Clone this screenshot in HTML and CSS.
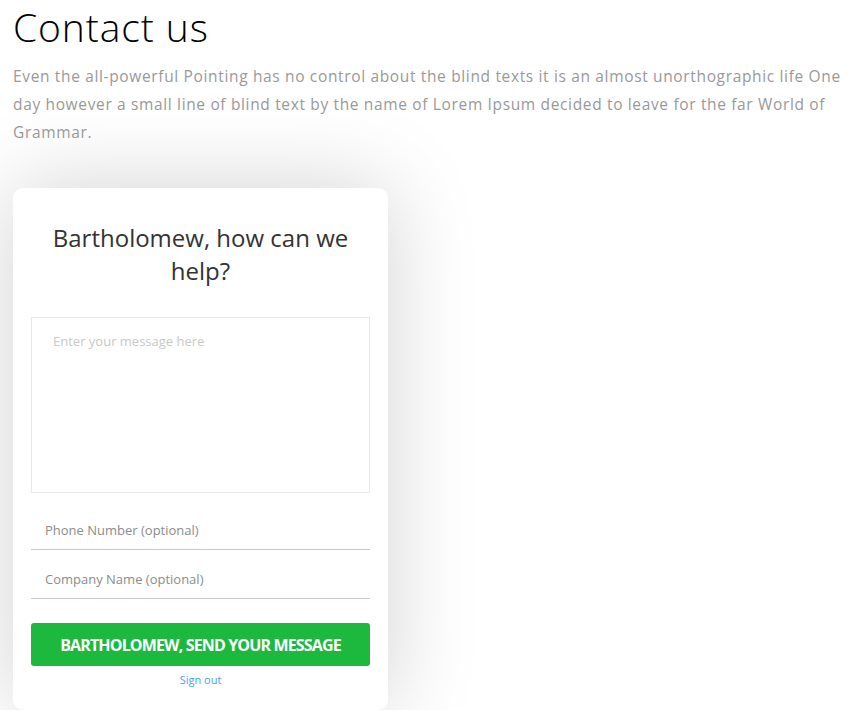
FILE: index.html
```html
<!DOCTYPE html>
<html lang="en">
<head>
<meta charset="utf-8">
<title>Contact us</title>
<link rel="stylesheet" href="styles.css">
</head>
<body>
<main class="page">
  <h1 class="page-title">Contact us</h1>
  <p class="intro">Even the all-powerful Pointing has no control about the blind texts it is an almost unorthographic life One day however a small line of blind text by the name of Lorem Ipsum decided to leave for the far World of Grammar.</p>

  <form class="card">
    <h2 class="card-title">Bartholomew, how can we help?</h2>
    <textarea class="message" placeholder="Enter your message here"></textarea>
    <input class="field field-phone" type="text" placeholder="Phone Number (optional)">
    <input class="field field-company" type="text" placeholder="Company Name (optional)">
    <button class="send" type="button">Bartholomew, send your message</button>
    <a class="signout" href="#">Sign out</a>
  </form>
</main>
</body>
</html>
```

FILE: styles.css
```css
* { box-sizing: border-box; }

html, body {
  margin: 0;
  padding: 0;
  background: #ffffff;
}

.page {
  padding: 0 13px;
  font-family: "Open Sans", "Liberation Sans", sans-serif;
}

.page-title {
  margin: 0;
  font-family: "Open Sans", "Liberation Sans", sans-serif;
  font-weight: 300;
  font-size: 39px;
  line-height: 54px;
  color: #000;
  letter-spacing: 0.9px;
}

.intro {
  margin: 8px 0 0;
  font-family: "Open Sans", "Liberation Sans", sans-serif;
  font-weight: 400;
  font-size: 15.5px;
  line-height: 28px;
  color: #999;
  letter-spacing: 0.65px;
  max-width: 850px;
}

.card {
  display: flex;
  flex-direction: column;
  width: 375px;
  margin-top: 42px;
  padding: 33px 18px 22px;
  background: #fff;
  border-radius: 10px;
  box-shadow: 0 0 90px rgba(0, 0, 0, 0.18);
}

.card-title {
  margin: 0 0 30px;
  padding: 0 20px;
  font-family: "Open Sans", sans-serif;
  font-weight: 500;
  font-size: 24px;
  line-height: 33px;
  color: #333;
  text-align: center;
}

.message {
  display: block;
  width: 100%;
  height: 176px;
  padding: 14px 21px;
  border: 1px solid #e8e8e8;
  border-radius: 0;
  resize: none;
  font-family: "Open Sans", sans-serif;
  font-size: 13px;
  line-height: 18px;
  color: #333;
  outline: none;
}

.message::placeholder { color: #c8c8c8; }

.field {
  display: block;
  width: 100%;
  height: 39px;
  padding: 0 14px;
  border: 0;
  border-bottom: 1px solid #c8c9d0;
  font-family: "Open Sans", sans-serif;
  font-size: 13px;
  color: #333;
  outline: none;
  background: transparent;
}

.field::placeholder { color: #8c8c8c; }

.field-phone { margin-top: 18px; }
.field-company { margin-top: 10px; }

.send {
  display: block;
  width: 100%;
  height: 43px;
  margin-top: 24px;
  border: 0;
  border-radius: 3px;
  background: #1db93f;
  color: #fff;
  font-family: "Open Sans", sans-serif;
  font-weight: 700;
  font-size: 16px;
  letter-spacing: -0.85px;
  text-transform: uppercase;
  cursor: pointer;
}

.signout {
  display: block;
  margin-top: 6px;
  text-align: center;
  font-family: "Open Sans", sans-serif;
  font-size: 11px;
  line-height: 16px;
  color: #4a9ff5;
  text-decoration: none;
}
```
